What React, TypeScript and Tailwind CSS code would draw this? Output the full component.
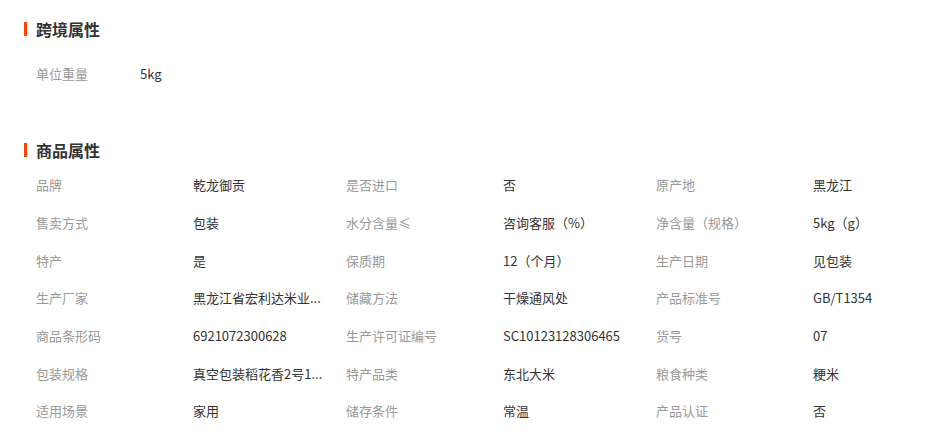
import React from 'react';

type Attr = { label: string; value: string };

const crossBorder: Attr[] = [{ label: '单位重量', value: '5kg' }];

const productAttrs: Attr[] = [
  { label: '品牌', value: '乾龙御贡' },
  { label: '是否进口', value: '否' },
  { label: '原产地', value: '黑龙江' },
  { label: '售卖方式', value: '包装' },
  { label: '水分含量≤', value: '咨询客服（%）' },
  { label: '净含量（规格）', value: '5kg（g）' },
  { label: '特产', value: '是' },
  { label: '保质期', value: '12（个月）' },
  { label: '生产日期', value: '见包装' },
  { label: '生产厂家', value: '黑龙江省宏利达米业...' },
  { label: '储藏方法', value: '干燥通风处' },
  { label: '产品标准号', value: 'GB/T1354' },
  { label: '商品条形码', value: '6921072300628' },
  { label: '生产许可证编号', value: 'SC10123128306465' },
  { label: '货号', value: '07' },
  { label: '包装规格', value: '真空包装稻花香2号1...' },
  { label: '特产品类', value: '东北大米' },
  { label: '粮食种类', value: '粳米' },
  { label: '适用场景', value: '家用' },
  { label: '储存条件', value: '常温' },
  { label: '产品认证', value: '否' },
];

const SectionTitle = ({ title }: { title: string }) => (
  <div className="flex items-center h-[20px]">
    <span className="w-[3px] h-[14px] bg-[#ff4400] mr-[9px]" />
    <h3 className="text-[16px] leading-[20px] font-bold text-[#333]">{title}</h3>
  </div>
);

const Cell = ({ label, value }: Attr) => (
  <div className="flex items-center h-[37.67px] text-[13px] leading-[20px]">
    <span className="w-[157px] shrink-0 text-[#999] whitespace-nowrap">{label}</span>
    <span className="text-[#333] whitespace-nowrap">{value}</span>
  </div>
);

export default function App() {
  return (
    <div
      className="w-[936px] h-[434px] bg-white px-[24px] pt-[19px] overflow-hidden"
      style={{ fontFamily: '"Noto Sans CJK SC", "Noto Sans", sans-serif' }}
    >
      <SectionTitle title="跨境属性" />
      <div className="pl-[12px] mt-[16px]">
        {crossBorder.map((a) => (
          <div key={a.label} className="flex items-center h-[37.67px] text-[13px] leading-[20px]">
            <span className="w-[104px] text-[#999]">{a.label}</span>
            <span className="text-[#333]">{a.value}</span>
          </div>
        ))}
      </div>

      <div className="mt-[47px]">
        <SectionTitle title="商品属性" />
        <div className="pl-[12px] mt-[7px] grid grid-cols-[310px_310px_310px]">
          {productAttrs.map((a) => (
            <Cell key={a.label} label={a.label} value={a.value} />
          ))}
        </div>
      </div>
    </div>
  );
}
